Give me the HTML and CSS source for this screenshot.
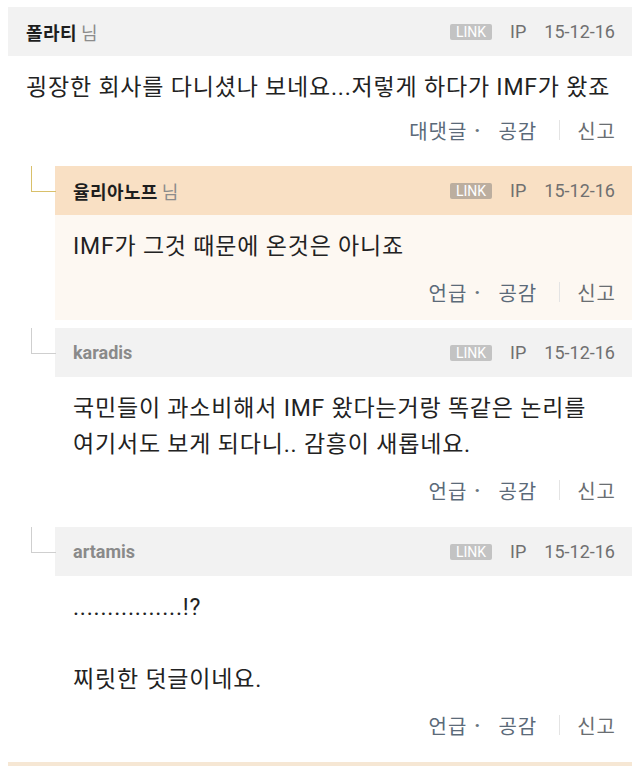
FILE: index.html
```html
<!DOCTYPE html>
<html lang="ko">
<head>
<meta charset="utf-8">
<title>댓글</title>
<link rel="stylesheet" href="styles.css">
</head>
<body>
<div class="thread">
  <article class="comment top">
    <header class="c-head">
      <span class="author"><b class="name">폴라티</b><span class="nim">님</span></span>
      <span class="meta"><span class="link">LINK</span><span class="ip">IP</span><span class="date">15-12-16</span></span>
    </header>
    <div class="c-body">
      <p class="text">굉장한 회사를 다니셨나 보네요...저렇게 하다가 IMF가 왔죠</p>
      <div class="actions"><span class="act">대댓글</span><span class="dot">·</span><span class="act">공감</span><span class="sep"></span><span class="act report">신고</span></div>
    </div>
  </article>

  <article class="comment reply gold">
    <header class="c-head">
      <span class="author"><b class="name">율리아노프</b><span class="nim">님</span></span>
      <span class="meta"><span class="link">LINK</span><span class="ip">IP</span><span class="date">15-12-16</span></span>
    </header>
    <div class="c-body">
      <p class="text">IMF가 그것 때문에 온것은 아니죠</p>
      <div class="actions"><span class="act">언급</span><span class="dot">·</span><span class="act">공감</span><span class="sep"></span><span class="act report">신고</span></div>
    </div>
  </article>

  <article class="comment reply">
    <header class="c-head">
      <span class="author"><b class="name anon">karadis</b></span>
      <span class="meta"><span class="link">LINK</span><span class="ip">IP</span><span class="date">15-12-16</span></span>
    </header>
    <div class="c-body">
      <p class="text">국민들이 과소비해서 IMF 왔다는거랑 똑같은 논리를<br>여기서도 보게 되다니.. 감흥이 새롭네요.</p>
      <div class="actions"><span class="act">언급</span><span class="dot">·</span><span class="act">공감</span><span class="sep"></span><span class="act report">신고</span></div>
    </div>
  </article>

  <article class="comment reply">
    <header class="c-head">
      <span class="author"><b class="name anon">artamis</b></span>
      <span class="meta"><span class="link">LINK</span><span class="ip">IP</span><span class="date">15-12-16</span></span>
    </header>
    <div class="c-body">
      <p class="text">................!?<br><br>찌릿한 덧글이네요.</p>
      <div class="actions"><span class="act">언급</span><span class="dot">·</span><span class="act">공감</span><span class="sep"></span><span class="act report">신고</span></div>
    </div>
  </article>

  <article class="comment top next">
    <header class="c-head"></header>
  </article>
</div>
</body>
</html>
```

FILE: styles.css
```css
* { box-sizing: border-box; }

html, body {
  margin: 0;
  padding: 0;
  background: #ffffff;
}

body {
  font-family: Roboto, "Noto Sans CJK KR", sans-serif;
  color: #222222;
}

.thread {
  height: 766px;
  overflow: hidden;
  padding: 7px 8px 0 8px;
}

.comment {
  margin: 0 0 8px 0;
}

.comment.top { margin-bottom: 7px; }

.c-head {
  height: 49px;
  display: flex;
  align-items: center;
  justify-content: space-between;
  padding: 0 17px 0 18px;
  background: #f2f2f2;
}

.author {
  display: flex;
  align-items: center;
  font-size: 18px;
  letter-spacing: 0.4px;
}

.name {
  font-weight: 700;
  color: #1e1e1e;
}

.name.anon {
  color: #8a8a8a;
  letter-spacing: 0;
}

.nim {
  color: #8c8c8c;
  margin-left: 4px;
}

.meta {
  display: flex;
  align-items: center;
  font-size: 18px;
  color: #707070;
}

.link {
  background: #c3c3c3;
  color: #ffffff;
  font-size: 14px;
  line-height: 16px;
  height: 16px;
  padding: 0 6px;
  border-radius: 2px;
  margin-right: 18px;
}

.ip { margin-right: 18px; }

.c-body {
  padding: 14px 16px 14px 18px;
}

.text {
  margin: 0;
  font-size: 23px;
  letter-spacing: 0.8px;
  line-height: 36px;
  color: #222222;
}

.actions {
  margin-top: 12px;
  height: 30px;
  display: flex;
  align-items: center;
  justify-content: flex-end;
  font-size: 20px;
  letter-spacing: 1px;
  color: #5b6a79;
}

.top .actions { margin-top: 9px; }

.dot {
  margin: 0 17px 0 7px;
  color: #6b7680;
  font-weight: 700;
}

.sep {
  width: 1px;
  height: 20px;
  background: #e4e4e4;
  margin: 0 17px 0 22px;
}

.report { color: #6a6e72; }

/* replies */
.reply {
  position: relative;
  margin-left: 47px;
}

.reply::before {
  content: "";
  position: absolute;
  left: -24px;
  top: 0;
  width: 24px;
  height: 25px;
  border-left: 1px solid #cfcfcf;
  border-bottom: 1px solid #cfcfcf;
}

.reply.gold::before {
  border-color: #d9c06a;
}

.reply.gold .c-head {
  background: #f9e0c4;
}

.reply.gold .c-body {
  background: #fdf8f2;
  padding-bottom: 13px;
}

.reply.gold .link {
  background: #bcae9f;
}

.next .c-head {
  background: #f6e7d4;
}
```
